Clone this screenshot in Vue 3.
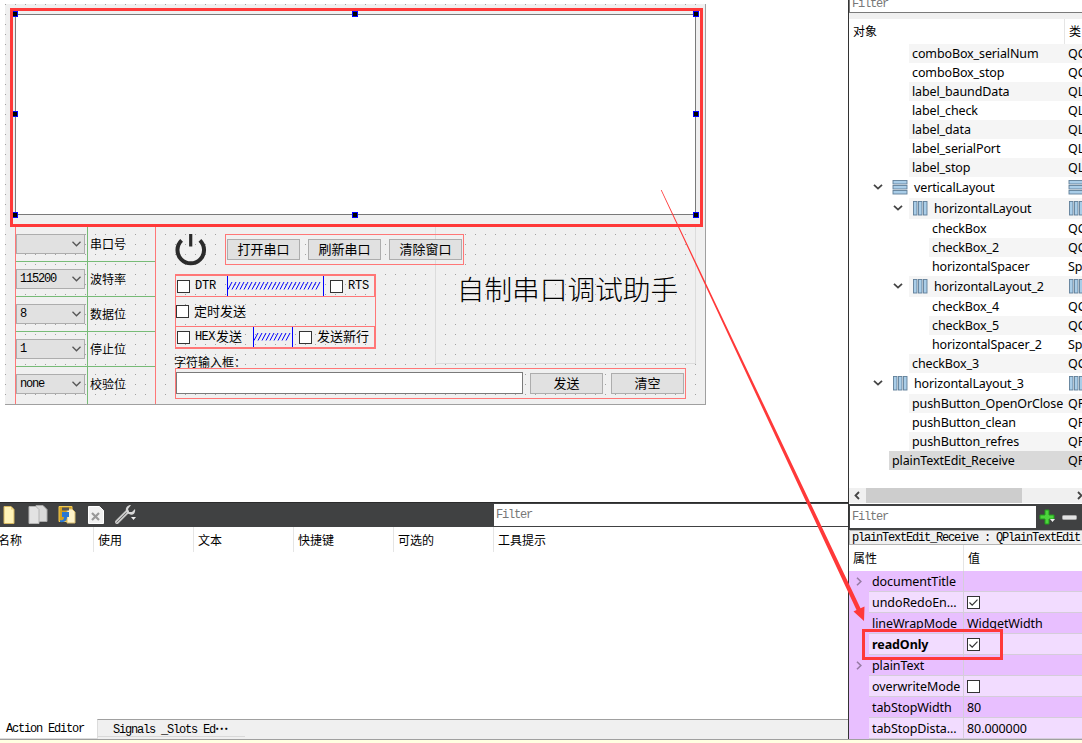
<template>
  <div class="designer">
    <div class="left">
      <section class="canvas">
        <div class="form">
          <div class="grid-layout">
            <div v-for="row in settings" :key="row.label" class="setting">
              <div class="combo">
                <span class="mono">{{ row.value }}</span>
                <svg width="9" height="6" viewBox="0 0 9 6"><path d="M.5 .8 4.500 4.800 8.500 .8" /></svg>
              </div>
              <label>{{ row.label }}</label>
            </div>
          </div>

          <div class="title">自制串口调试助手</div>

          <svg class="power" width="32" height="32" viewBox="0 0 32 32">
            <path d="M6.600 6.400A13.300 13.300 0 1 0 24.900 6.400" fill="none" stroke="#2b2b2b" stroke-width="4" />
            <path d="M15.700 0V12.500" stroke="#2b2b2b" stroke-width="3.200" />
          </svg>

          <div class="buttons">
            <button v-for="name in actions" :key="name">{{ name }}</button>
          </div>

          <div class="options">
            <div class="option boxed">
              <i class="check"></i><span class="mono wide dtr">DTR</span>
              <svg class="spacer" width="97" height="20"><path :d="hatch(97)" /></svg>
              <i class="check"></i><span class="mono wide">RTS</span>
            </div>
            <div class="option timer"><i class="check"></i><span>定时发送</span></div>
            <div class="option boxed">
              <i class="check"></i><span class="mono hex">HEX</span><span class="send">发送</span>
              <svg class="spacer" width="40" height="20"><path :d="hatch(40)" /></svg>
              <i class="check"></i><span>发送新行</span>
            </div>
          </div>

          <div class="caption">字符输入框：</div>
          <div class="sender">
            <div class="line-edit"></div>
            <button>发送</button>
            <button>清空</button>
          </div>

          <div class="selection">
            <div class="receive"></div>
          </div>
          <i v-for="(h, i) in handles" :key="i" class="handle" :style="{ left: h[0] + 'px', top: h[1] + 'px' }"></i>
          <div class="highlight"></div>
        </div>
      </section>

      <section class="action-editor">
        <div class="toolbar">
          <svg width="494" height="25" viewBox="0 0 494 25">
            <path d="M4 3.500h7l3 3v14H4z" fill="#fff3b8" stroke="#d6b860" />
            <path d="M11 3.500v3h3" fill="#f0d47c" />
            <path d="M36 2.500h7l4 4v12H36z" fill="#d9d9d9" stroke="#aaa" />
            <path d="M29 3.500h7l3 3v14H29z" fill="#e3e3e3" stroke="#b5b5b5" />
            <path d="M59 3.500h13v15H59z" fill="#d3a01f" stroke="#f1cb55" />
            <path d="M67 6h5l3 3v11h-8z" fill="#fff4cb" stroke="#d8bd6d" />
            <path d="M62 4.500h7v3h-7z" fill="#555" />
            <path d="M60 17q4 1 4-3h-2v-5h7v5h-2q0 6-7 5z" fill="#2a78d4" />
            <path d="M88.500 3.500h11l4 4v13h-15z" fill="#f1f1f1" stroke="#fff" />
            <path d="M92 10l7 7M99 10l-7 7" stroke="#999" stroke-width="2.200" />
            <path d="M117 19 127 9" stroke="#c7c7c7" stroke-width="4" stroke-linecap="round" />
            <path d="M116.500 19.500 127 9" stroke="#777" />
            <path d="M131 2l-3 4 1 3 3 0 3-3c1 5-3 7-6 5-5-1-4-9 2-9z" fill="#d8d8d8" />
            <path d="M131 14h5l-2.500 3z" fill="#eee" />
          </svg>
          <div class="filter mono">Filter</div>
        </div>
        <div class="columns">
          <span v-for="col in columns" :key="col">{{ col }}</span>
        </div>
        <div class="blank"></div>
        <div class="tabs">
          <div class="tab active mono">Action Editor</div>
          <div class="rest"><div class="tab mono">Signals _Slots Ed<b>⋯</b></div></div>
        </div>
      </section>
    </div>

    <aside class="right">
      <div class="top-filter mono">Filter</div>
      <div class="tree-head"><span>对象</span><span class="kind">类</span></div>
      <div class="tree">
        <div
          v-for="(node, i) in tree"
          :key="node.name"
          class="node"
          :class="{ layout: node.icon, odd: i % 2 === 0, selected: node.name === 'plainTextEdit_Receive' }"
        >
          <div class="indent" :style="{ width: node.indent + 'px' }">
            <svg v-if="node.icon" width="10" height="6" viewBox="0 0 10 6"><path d="M1 .8 5 4.600 9 .8" /></svg>
          </div>
          <div class="node-body">
            <svg v-if="node.icon" class="glyph" width="16" height="15" viewBox="0 0 16 15">
              <template v-if="node.icon === 'v'">
                <rect v-for="y in [0.5, 5.5, 10.5]" :key="y" x="1" :y="y" width="14" height="3.500" />
              </template>
              <template v-else>
                <rect v-for="x in [1.5, 6.5, 11.5]" :key="x" :x="x" y=".5" width="3.500" height="13.500" />
              </template>
            </svg>
            <span class="name" :class="{ 'after-icon': node.icon }">{{ node.name }}</span>
            <span class="kind">
              <svg v-if="node.icon" class="glyph" width="16" height="15" viewBox="0 0 16 15">
                <template v-if="node.icon === 'v'">
                  <rect v-for="y in [0.5, 5.5, 10.5]" :key="y" x="1" :y="y" width="14" height="3.500" />
                </template>
                <template v-else>
                  <rect v-for="x in [1.5, 6.5, 11.5]" :key="x" :x="x" y=".5" width="3.500" height="13.500" />
                </template>
              </svg>
              <template v-else>{{ node.kind }}</template>
            </span>
          </div>
        </div>
      </div>
      <div class="scroll">
        <svg width="17" height="15" viewBox="0 0 17 15"><path d="M10 4 6.500 7.500 10 11" /></svg>
        <div class="thumb"></div>
        <svg class="next" width="8" height="15" viewBox="0 0 8 15"><path d="M4 4 7.500 7.500 4 11" /></svg>
      </div>

      <div class="prop-toolbar">
        <div class="filter mono">Filter</div>
        <svg width="46" height="24" viewBox="0 0 46 24">
          <path d="M9 4h4v5h5v4h-5v5H9v-5H4V9h5z" fill="#4cd53c" stroke="#239b1d" />
          <path d="M14 13h5l-2.500 3z" fill="#eee" />
          <rect x="26.500" y="9.500" width="14" height="4" rx="1" fill="#e2e2e2" stroke="#aaa" />
        </svg>
      </div>
      <div class="object-name mono">plainTextEdit_Receive : QPlainTextEdit</div>
      <div class="prop-head"><span>属性</span><span>值</span></div>
      <div class="props">
        <div v-for="(p, i) in properties" :key="p.name" class="prop" :class="{ dark: i % 2 === 0, bold: p.name === 'readOnly' }">
          <div class="gutter">
            <svg v-if="p.expand" width="6" height="9" viewBox="0 0 6 9"><path d="M1 .8 4.800 4.500 1 8.200" /></svg>
          </div>
          <div class="prop-name">{{ p.name }}</div>
          <div class="prop-value">
            <i v-if="p.checked !== undefined" class="check">
              <svg v-if="p.checked" width="11" height="11" viewBox="0 0 11 11"><path d="M1.500 5.500 4.200 8.200 9.500 2.700" /></svg>
            </i>
            <span v-else>{{ p.value }}</span>
          </div>
        </div>
      </div>
    </aside>

    <footer class="strip"></footer>

    <svg class="arrow" width="1082" height="743" viewBox="0 0 1082 743">
      <path d="M660.800 190 856.500 610 853.500 611.500 864 621 864.500 606.500 860.500 608.200 661.600 190z" />
    </svg>
    <div class="callout"></div>
  </div>
</template>

<script setup>
const settings = [
  { value: "", label: "串口号" },
  { value: "115200", label: "波特率" },
  { value: "8", label: "数据位" },
  { value: "1", label: "停止位" },
  { value: "none", label: "校验位" },
];

const actions = ["打开串口", "刷新串口", "清除窗口"];
const columns = ["名称", "使用", "文本", "快捷键", "可选的", "工具提示"];

const handles = [
  [7, 7], [347, 7], [688, 7],
  [7, 107], [688, 107],
  [7, 208], [347, 208], [688, 208],
];

const tree = [
  { name: "comboBox_serialNum", kind: "QComboBox", indent: 60 },
  { name: "comboBox_stop", kind: "QComboBox", indent: 60 },
  { name: "label_baundData", kind: "QLabel", indent: 60 },
  { name: "label_check", kind: "QLabel", indent: 60 },
  { name: "label_data", kind: "QLabel", indent: 60 },
  { name: "label_serialPort", kind: "QLabel", indent: 60 },
  { name: "label_stop", kind: "QLabel", indent: 60 },
  { name: "verticalLayout", icon: "v", indent: 40 },
  { name: "horizontalLayout", icon: "h", indent: 60 },
  { name: "checkBox", kind: "QCheckBox", indent: 80 },
  { name: "checkBox_2", kind: "QCheckBox", indent: 80 },
  { name: "horizontalSpacer", kind: "Spacer", indent: 80 },
  { name: "horizontalLayout_2", icon: "h", indent: 60 },
  { name: "checkBox_4", kind: "QCheckBox", indent: 80 },
  { name: "checkBox_5", kind: "QCheckBox", indent: 80 },
  { name: "horizontalSpacer_2", kind: "Spacer", indent: 80 },
  { name: "checkBox_3", kind: "QCheckBox", indent: 60 },
  { name: "horizontalLayout_3", icon: "h", indent: 40 },
  { name: "pushButton_OpenOrClose", kind: "QPushButton", indent: 60 },
  { name: "pushButton_clean", kind: "QPushButton", indent: 60 },
  { name: "pushButton_refres", kind: "QPushButton", indent: 60 },
  { name: "plainTextEdit_Receive", kind: "QPlainTextEdit", indent: 40 },
];

const properties = [
  { name: "documentTitle", expand: true },
  { name: "undoRedoEn...", checked: true },
  { name: "lineWrapMode", value: "WidgetWidth" },
  { name: "readOnly", checked: true },
  { name: "plainText", expand: true },
  { name: "overwriteMode", checked: false },
  { name: "tabStopWidth", value: "80" },
  { name: "tabStopDista...", value: "80.000000" },
];

// end bars plus the slanted spring between them
function hatch(width) {
  let d = `M.5 0V20M${width - 0.5} 0V20`;
  for (let x = 1; x + 4 < width; x += 4) {
    d += `M${x} 13.500L${x + 4} 6`;
  }
  return d;
}
</script>

<style>
body {
  background: #fff;
  overflow: hidden;
}
</style>

<style scoped>
* {
  box-sizing: border-box;
}

.designer {
  position: relative;
  width: 1082px;
  height: 743px;
  display: grid;
  grid-template-columns: 848px 234px;
  grid-template-rows: 739px 4px;
  font: 12px "Noto Sans CJK SC", sans-serif;
  color: #000;
  overflow: hidden;
}

.mono {
  font-family: "Liberation Mono", monospace;
  font-size: 12px;
  letter-spacing: -1.2px;
  white-space: pre;
}

.left {
  display: flex;
  flex-direction: column;
  min-width: 0;
}

.canvas {
  height: 502px;
  padding: 4px 0 0 5px;
}

.form {
  position: relative;
  width: 701px;
  height: 401px;
  border-right: 1px solid #a0a0a0;
  border-bottom: 1px solid #a0a0a0;
  background:
    linear-gradient(transparent 1px, #f0f0f0 1px) 0 0 / 10px 10px,
    linear-gradient(90deg, #a0a0a0 1px, #f0f0f0 1px) 0 0 / 10px 10px;
}

/* widgets dropped on the form */
.grid-layout {
  position: absolute;
  left: 10px;
  top: 223px;
  width: 141px;
  height: 177px;
  border: solid #f77;
  border-width: 0 1px;
  background: linear-gradient(#7b7, #7b7) 71px 0 / 1px 100% no-repeat;
}

.setting {
  height: 35px;
  display: flex;
  align-items: center;
  border-bottom: 1px solid #7b7;
}

.setting:last-child {
  border-bottom-color: transparent;
}

.combo {
  width: 69px;
  height: 20px;
  border: 1px solid #adadad;
  background: #e1e1e1;
  display: flex;
  align-items: center;
  justify-content: space-between;
  padding: 0 3px;
}

.combo path {
  fill: none;
  stroke: #555;
  stroke-width: 1.3;
}

.setting label {
  margin: -2px 0 0 5px;
}

.title {
  position: absolute;
  left: 430px;
  top: 210px;
  width: 261px;
  height: 150px;
  border: 1px solid #dcdcdc;
  text-align: center;
  font-size: 27.7px;
  font-weight: 300;
  line-height: 146px;
  padding-left: 4px;
  white-space: nowrap;
}

.power {
  position: absolute;
  left: 169.6px;
  top: 230px;
}

.buttons {
  position: absolute;
  left: 220px;
  top: 230px;
  width: 239px;
  height: 31px;
  border: 1px solid #f77;
  padding: 4px 1px;
  display: flex;
  gap: 8px;
}

button {
  width: 73px;
  height: 21px;
  padding: 0 0 2px;
  flex: none;
  border: 1px solid #adadad;
  background: #e1e1e1;
  font: 13px/17px "Noto Sans CJK SC", sans-serif;
  color: #000;
}

.options {
  position: absolute;
  left: 170px;
  top: 270px;
  width: 201px;
  height: 75px;
  border: 1px solid #f77;
  border-left: 0;
  font-size: 13px;
  line-height: 18px;
  background: linear-gradient(#f77, #f77) 0 0 / 1px 100% no-repeat;
}

.option {
  height: 29px;
  display: flex;
  align-items: center;
  padding-left: 1px;
}

.option span {
  margin-top: -2px;
}

.boxed {
  height: 22px;
  border: 1px solid #f77;
}

.timer span {
  margin-left: 5px;
}

.check {
  display: block;
  flex: none;
  width: 13px;
  height: 13px;
  border: 1px solid #333;
  background: #fff;
}

.boxed .check + span {
  margin-left: 5px;
}

.option .wide {
  margin-top: 0;
  letter-spacing: -0.2px;
}

.dtr {
  width: 32px;
}

.option .hex {
  width: 21px;
  margin-top: 0;
  letter-spacing: -0.6px;
}

.send {
  width: 37px;
}

.spacer {
  flex: none;
  margin-right: 6px;
}

.spacer path {
  fill: none;
  stroke: #00f;
  stroke-width: 1;
}

.caption {
  position: absolute;
  left: 169px;
  top: 349px;
  line-height: 18px;
}

.sender {
  position: absolute;
  left: 170px;
  top: 364px;
  width: 511px;
  height: 31px;
  border: 1px solid #f77;
  padding-top: 4px;
  display: flex;
  gap: 8px;
}

.line-edit {
  width: 347px;
  height: 22px;
  margin: -1px -1px 0 0;
  border: 1px solid #7a7a7a;
  background: #fff;
}

.selection {
  position: absolute;
  left: 6px;
  top: 5px;
  width: 691px;
  height: 217px;
  padding: 5px 0 0 4px;
  background: #f0f0f0;
}

.receive {
  width: 681px;
  height: 201px;
  border: 1px solid #7a7a7a;
  background: #fff;
}

.handle {
  position: absolute;
  width: 6px;
  height: 6px;
  background: #000;
  border: 1px solid #00f;
}

.highlight {
  position: absolute;
  left: 5px;
  top: 4px;
  width: 693px;
  height: 219px;
  border: 3px solid #ff3939;
}

/* action editor dock */
.action-editor {
  flex: 1;
  display: flex;
  flex-direction: column;
}

.toolbar {
  height: 25px;
  display: flex;
  align-items: center;
  background: #404142;
  border-top: 1px solid #2b2b2b;
}

.filter {
  flex: 1;
  height: 22px;
  padding-left: 2px;
  line-height: 22px;
  background: #fff;
  color: #777;
}

.columns {
  height: 25px;
  display: flex;
  line-height: 25px;
}

.columns span {
  width: 100px;
  padding-left: 4px;
  border-right: 1px solid #e5e5e5;
}

.columns span:first-child {
  width: 94px;
  padding-left: 0;
  text-indent: -2px;
}

.columns span:last-child {
  border-right: 0;
}

.blank {
  flex: 1;
}

.tabs {
  height: 20px;
  display: flex;
}

.tab.active {
  width: 97px;
  padding-left: 6px;
  line-height: 21px;
  border-bottom: 1px solid #dcdcdc;
}

.rest {
  flex: 1;
  background: #f0f0f0;
  border-top: 1px solid #a0a0a0;
  border-left: 1px solid #dcdcdc;
}

.rest .tab {
  width: 147px;
  height: 17px;
  padding-left: 15px;
  line-height: 17px;
  border-bottom: 1px solid #d9d9d9;
}

.tab b {
  font-family: "Noto Sans CJK SC", sans-serif;
  line-height: 10px;
  vertical-align: 3px;
}

/* object inspector */
.right {
  border-left: 1px solid #333;
  display: flex;
  flex-direction: column;
  min-width: 0;
  overflow: hidden;
}

.top-filter {
  height: 13px;
  padding-left: 2px;
  line-height: 8px;
  color: #777;
  border-bottom: 1px solid #7a7a7a;
  border-left: 1px solid #7a7a7a;
}

.tree-head {
  height: 31px;
  display: flex;
  padding-left: 4px;
  border-top: 6px solid #f0f0f0;
  line-height: 24px;
}

.tree-head span:first-child {
  width: 212px;
  border-right: 1px solid #e5e5e5;
}

.tree-head .kind {
  padding-left: 4px;
}

.tree {
  height: 444px;
  font-family: "Noto Sans", sans-serif;
  font-size: 12.5px;
  letter-spacing: -0.12px;
}

.node {
  display: flex;
  height: 19px;
  line-height: 19px;
}

.node.layout {
  height: 21px;
  line-height: 21px;
}

.indent {
  flex: none;
  display: flex;
  align-items: center;
  justify-content: flex-end;
  padding: 0 6px 2px 0;
}

.indent path {
  fill: none;
  stroke: #444;
  stroke-width: 1.8;
}

.node-body {
  flex: 1;
  display: flex;
  align-items: center;
  min-width: 0;
  padding-left: 3px;
  overflow: hidden;
}

.odd .node-body {
  background: #f5f5f5;
}

.selected .node-body {
  background: #d9d9d9;
}

.name {
  flex: 1;
  min-width: 0;
  white-space: nowrap;
}

.after-icon {
  padding-left: 6px;
}

.node .kind {
  flex: none;
  width: 14px;
  white-space: nowrap;
}

.glyph {
  display: block;
  flex: none;
}

.glyph rect {
  fill: #a9cde8;
  stroke: #617f99;
  stroke-width: 0.9;
}

.scroll {
  height: 16px;
  display: flex;
  background: #f0f0f0;
  border-bottom: 1px solid #fff;
}

.scroll path {
  fill: none;
  stroke: #444;
  stroke-width: 1.8;
}

.thumb {
  width: 156px;
  background: #cdcdcd;
}

.next {
  margin-left: auto;
}

/* property editor */
.prop-toolbar {
  height: 26px;
  padding: 2px 0 0 1px;
  display: flex;
  background: #404142;
}

.object-name {
  height: 15px;
  padding-left: 2px;
  line-height: 14px;
  background: #f0f0f0;
  border: 1px solid #b4b4b4;
  border-right: 0;
}

.prop-head {
  height: 26px;
  display: flex;
  line-height: 25px;
  padding-left: 4px;
}

.prop-head span:first-child {
  width: 111px;
  border-right: 1px solid #e5e5e5;
}

.prop-head span + span {
  padding-left: 4px;
}

.props {
  font-family: "Noto Sans", sans-serif;
  font-size: 12.5px;
  letter-spacing: -0.08px;
}

.prop {
  height: 21px;
  display: flex;
  line-height: 22px;
  background: #e8bfff;
}

.gutter {
  width: 20px;
  padding: 6px 0 0 7px;
  line-height: 0;
}

.gutter path {
  fill: none;
  stroke: #977ba5;
  stroke-width: 1.6;
}

.prop-name {
  width: 95px;
  padding-left: 3px;
  white-space: nowrap;
  border-right: 1px solid #d5cdda;
  border-bottom: 1px solid #d5cdda;
  background: #f2dcff;
}

.prop-value {
  flex: 1;
  padding-left: 3px;
  display: flex;
  align-items: center;
  border-bottom: 1px solid #d5cdda;
  background: #f2dcff;
}

.prop-value span {
  padding-top: 1px;
}

.dark .prop-name,
.dark .prop-value {
  background: #e8bfff;
}

.bold .prop-name {
  font-weight: 700;
}

.check svg {
  display: block;
}

.check path {
  fill: none;
  stroke: #333;
  stroke-width: 1.2;
}

.strip {
  grid-column: 1 / 3;
  background: #ffffe1;
  border-top: 1px solid #a0a0a0;
}

/* annotations over the window */
.arrow {
  position: absolute;
  left: 0;
  top: 0;
  fill: #ff3939;
}

.callout {
  position: absolute;
  left: 862px;
  top: 629px;
  width: 141px;
  height: 31px;
  border: 3px solid #ff3939;
}
</style>
